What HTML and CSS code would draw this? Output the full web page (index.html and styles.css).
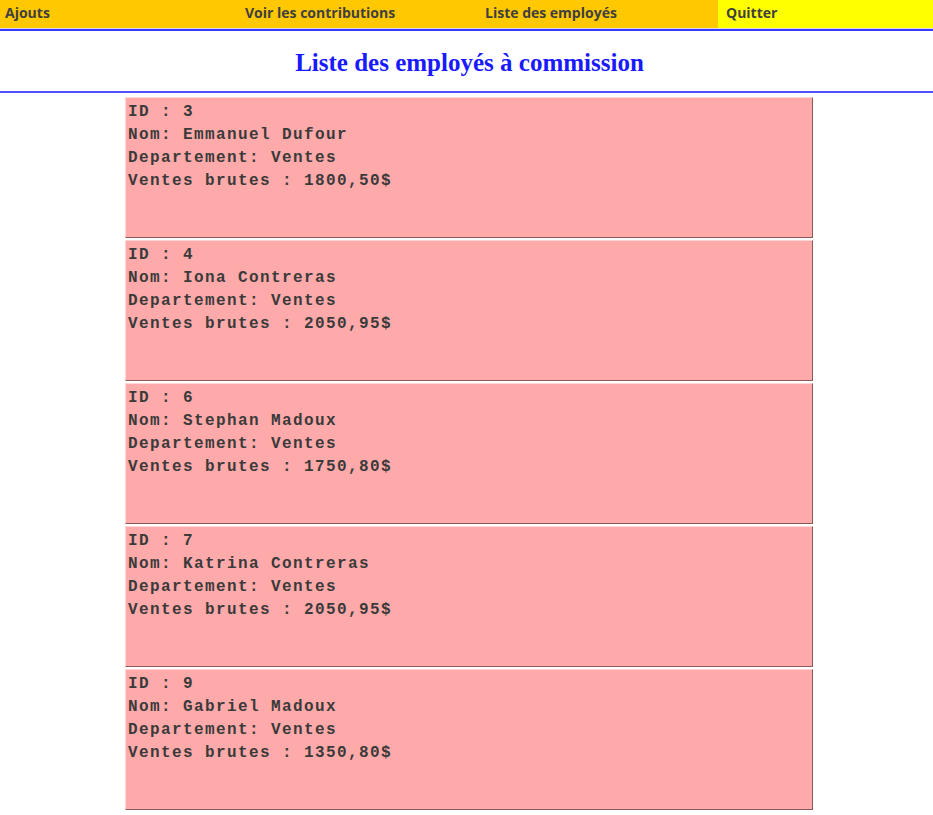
FILE: index.html
```html
<!DOCTYPE html>
<html lang="fr">
<head>
<meta charset="utf-8">
<title>Liste des employés à commission</title>
<link rel="stylesheet" href="styles.css">
</head>
<body>
<nav class="menu">
  <a class="menu-item w1" href="#">Ajouts</a>
  <a class="menu-item w2" href="#">Voir les contributions</a>
  <a class="menu-item w3" href="#">Liste des employés</a>
  <a class="menu-item quit" href="#">Quitter</a>
</nav>
<header class="titre">
  <h1>Liste des employés à commission</h1>
</header>
<main class="liste">
  <div class="carte">ID : 3<br>Nom: Emmanuel Dufour<br>Departement: Ventes<br>Ventes brutes : 1800,50$</div>
  <div class="carte">ID : 4<br>Nom: Iona Contreras<br>Departement: Ventes<br>Ventes brutes : 2050,95$</div>
  <div class="carte">ID : 6<br>Nom: Stephan Madoux<br>Departement: Ventes<br>Ventes brutes : 1750,80$</div>
  <div class="carte">ID : 7<br>Nom: Katrina Contreras<br>Departement: Ventes<br>Ventes brutes : 2050,95$</div>
  <div class="carte">ID : 9<br>Nom: Gabriel Madoux<br>Departement: Ventes<br>Ventes brutes : 1350,80$</div>
</main>
</body>
</html>
```
FILE: styles.css
```css
html, body {
  margin: 0;
  padding: 0;
  background: #ffffff;
}

.menu {
  display: flex;
  height: 28px;
  background: #ffc800;
  border-bottom: 1px solid #d8d8e8;
}

.menu-item {
  display: flex;
  align-items: center;
  box-sizing: border-box;
  padding-left: 5px;
  padding-bottom: 3px;
  font-family: "Open Sans", "Liberation Sans", sans-serif;
  font-weight: 700;
  font-size: 14px;
  color: #3f3f3f;
  text-decoration: none;
}

.w1 { width: 240px; }
.w2 { width: 240px; }
.w3 { width: 238px; }

.quit {
  flex: 1;
  padding-left: 8px;
  background: #ffff00;
}

.titre {
  border-top: 2px solid #3a3aff;
  border-bottom: 2px solid #5050ff;
  display: flex;
  align-items: center;
  justify-content: center;
  padding-top: 4px;
  padding-left: 6px;
  box-sizing: border-box;
  height: 64px;
}

.titre h1 {
  margin: 0;
  font-family: "Liberation Serif", "Times New Roman", serif;
  font-weight: bold;
  font-size: 25px;
  color: #1a1aff;
}

.liste {
  display: flex;
  flex-direction: column;
  gap: 2px;
  width: 688px;
  margin: 4px 0 0 125px;
}

.carte {
  box-sizing: border-box;
  height: 141px;
  padding: 3px 2px 2px;
  background: #ffaaaa;
  border: 1px solid;
  border-color: #ffd6d6 #8a5a5a #8a5a5a #ffd6d6;
  font-family: "Liberation Mono", "Courier New", monospace;
  font-weight: bold;
  font-size: 16px;
  letter-spacing: 1.4px;
  line-height: 23px;
  color: #3a3a3a;
}
```
